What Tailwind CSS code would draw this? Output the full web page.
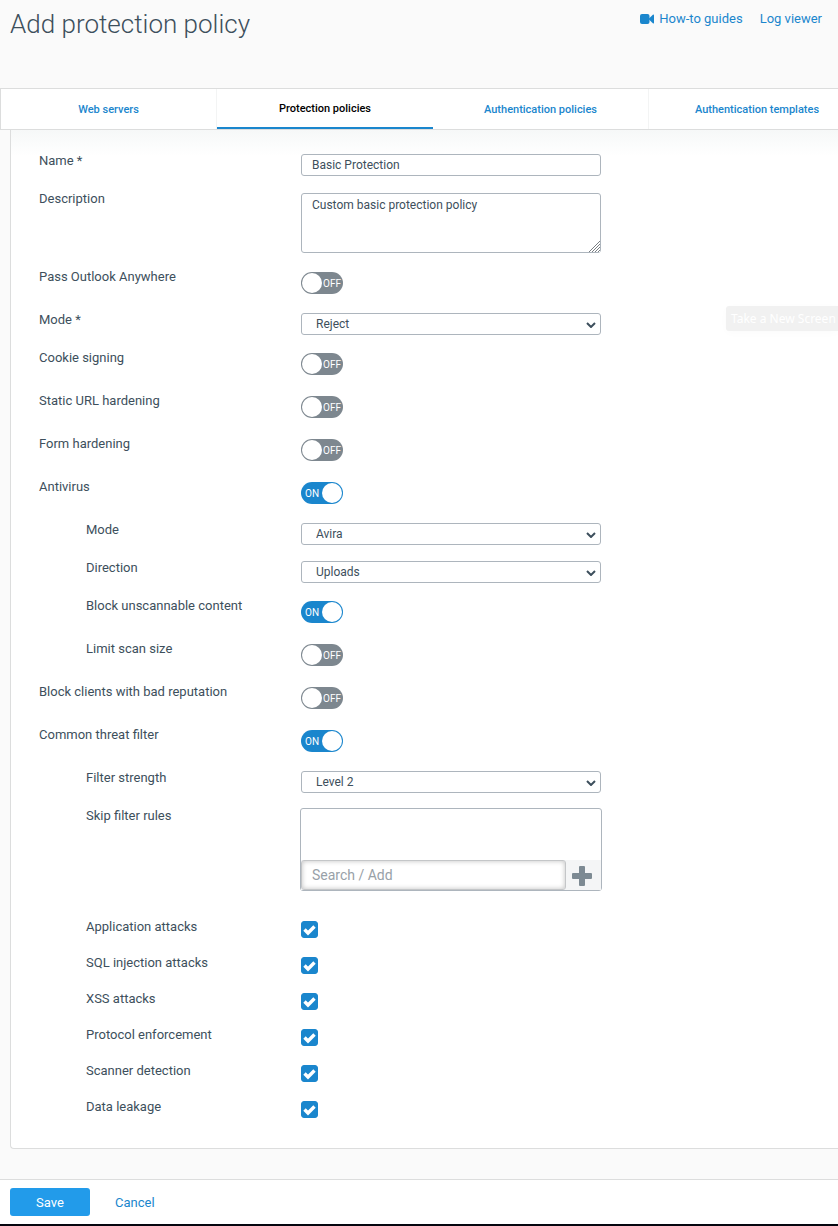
<!DOCTYPE html>
<html lang="en">

<head>
  <meta charset="UTF-8">
  <meta name="viewport" content="width=device-width, initial-scale=1.0">
  <title>Add protection policy</title>
  <script src="https://cdn.jsdelivr.net/npm/@tailwindcss/browser@4"></script>
</head>

<body class="relative min-h-screen overflow-x-hidden bg-[#fafafa] font-['Roboto',sans-serif] text-[13px] leading-5 text-[#3d4f5c]">

  <!-- Shared icons -->
  <svg class="hidden">
    <symbol id="chevron" viewBox="0 0 10 6">
      <path d="m1 1 4 4 4-4" fill="none" stroke="currentColor" stroke-width="2" />
    </symbol>
    <symbol id="check" viewBox="0 0 17 17">
      <path d="m3.500 8.500 3.500 3.500 6.500-6.500" fill="none" stroke="currentColor" stroke-width="3.400" />
    </symbol>
  </svg>

  <!-- Page header -->
  <header class="flex h-[88px] items-start justify-between pl-[10px] pr-4">
    <h1 class="pt-1 text-[26px] font-light leading-10">Add protection policy</h1>
    <nav class="flex gap-[17px] pt-[9px] text-[#1a86cd]">
      <a href="#" class="flex items-center gap-[5px]">
        <svg class="h-[10px] w-[14px]" viewBox="0 0 14 10" fill="currentColor">
          <rect x="0" y="0" width="9.500" height="10" rx="2" />
          <path d="M9 4.500 12.800.700Q14 0 14 1.200V8.800Q14 10 12.800 9.300L9 5.500Z" />
        </svg>
        How-to guides
      </a>
      <a href="#">Log viewer</a>
    </nav>
  </header>

  <!-- Tabs -->
  <nav class="relative flex overflow-hidden border-y border-l border-[#dcdddd] bg-white text-[11px] font-medium text-[#1a86cd]">
    <a href="#" class="flex h-10 w-[216px] shrink-0 items-center justify-center border-r border-[#f3f4f4] pt-px">Web servers</a>
    <a href="#" class="flex h-10 w-[216px] shrink-0 items-center justify-center border-b-2 border-[#1a86cd] pt-px text-black">Protection policies</a>
    <a href="#" class="flex h-10 w-[216px] shrink-0 items-center justify-center border-r border-[#f3f4f4] pt-px">Authentication policies</a>
    <a href="#" class="flex h-10 w-[216px] shrink-0 items-center justify-center pt-px">Authentication templates</a>
  </nav>

  <form>
    <!-- Policy settings -->
    <div class="ml-[10px] rounded-bl-sm border-b border-l border-[#dcdddd] bg-white bg-linear-to-b from-[#f6f8f8] to-white to-[26px] pb-[15px] pl-7 pt-[21px]">

      <div class="flex h-[38px]">
        <label for="name" class="w-[262px] shrink-0">Name *</label>
        <input id="name" type="text" value="Basic Protection"
          class="mt-[3px] h-[22px] w-[300px] rounded-[3px] border border-[#adb5bd] bg-white px-[10px] text-[12px]">
      </div>

      <div class="flex h-[78px]">
        <label for="description" class="w-[262px] shrink-0">Description</label>
        <div class="relative mt-1 h-fit w-fit">
          <textarea id="description"
            class="block h-[60px] w-[300px] rounded-[3px] border border-[#adb5bd] bg-white px-[10px] py-[2px] text-[12px] leading-[18px]">Custom basic protection policy</textarea>
          <svg class="pointer-events-none absolute bottom-px right-px size-[11px] bg-white" viewBox="0 0 11 11" stroke="#7a7f83" stroke-width="1">
            <path d="M0 11 11 0M3 11l8-8M6 11l5-5M9 11l2-2" />
          </svg>
        </div>
      </div>

      <div class="flex h-[43px]">
        <label for="outlook" class="w-[262px] shrink-0">Pass Outlook Anywhere</label>
        <label class="relative mt-[5px] h-[22px] w-[42px] text-[10px] leading-6 text-white">
          <input id="outlook" type="checkbox" class="peer block h-full w-full appearance-none rounded-full bg-[#7d878f] checked:bg-[#1a86cd]">
          <span class="absolute right-[2px] top-0 peer-checked:hidden">OFF</span>
          <span class="absolute left-1 top-0 hidden peer-checked:block">ON</span>
          <span class="absolute left-px top-px size-5 rounded-full bg-white peer-checked:left-[21px]"></span>
        </label>
      </div>

      <div class="flex h-[38px]">
        <label for="mode" class="w-[262px] shrink-0">Mode *</label>
        <div class="relative mt-[3px] h-[22px] w-[300px]">
          <select id="mode" class="block size-full appearance-none rounded-[3px] border border-[#adb5bd] bg-white pl-[14px] text-[12px]">
            <option>Reject</option>
          </select>
          <svg class="pointer-events-none absolute right-[5px] top-[9px] h-[6px] w-[10px]"><use href="#chevron" /></svg>
        </div>
      </div>

      <div class="flex h-[43px]">
        <label for="cookie" class="w-[262px] shrink-0">Cookie signing</label>
        <label class="relative mt-[5px] h-[22px] w-[42px] text-[10px] leading-6 text-white">
          <input id="cookie" type="checkbox" class="peer block h-full w-full appearance-none rounded-full bg-[#7d878f] checked:bg-[#1a86cd]">
          <span class="absolute right-[2px] top-0 peer-checked:hidden">OFF</span>
          <span class="absolute left-1 top-0 hidden peer-checked:block">ON</span>
          <span class="absolute left-px top-px size-5 rounded-full bg-white peer-checked:left-[21px]"></span>
        </label>
      </div>

      <div class="flex h-[43px]">
        <label for="url" class="w-[262px] shrink-0">Static URL hardening</label>
        <label class="relative mt-[5px] h-[22px] w-[42px] text-[10px] leading-6 text-white">
          <input id="url" type="checkbox" class="peer block h-full w-full appearance-none rounded-full bg-[#7d878f] checked:bg-[#1a86cd]">
          <span class="absolute right-[2px] top-0 peer-checked:hidden">OFF</span>
          <span class="absolute left-1 top-0 hidden peer-checked:block">ON</span>
          <span class="absolute left-px top-px size-5 rounded-full bg-white peer-checked:left-[21px]"></span>
        </label>
      </div>

      <div class="flex h-[43px]">
        <label for="formHardening" class="w-[262px] shrink-0">Form hardening</label>
        <label class="relative mt-[5px] h-[22px] w-[42px] text-[10px] leading-6 text-white">
          <input id="formHardening" type="checkbox" class="peer block h-full w-full appearance-none rounded-full bg-[#7d878f] checked:bg-[#1a86cd]">
          <span class="absolute right-[2px] top-0 peer-checked:hidden">OFF</span>
          <span class="absolute left-1 top-0 hidden peer-checked:block">ON</span>
          <span class="absolute left-px top-px size-5 rounded-full bg-white peer-checked:left-[21px]"></span>
        </label>
      </div>

      <!-- Antivirus -->
      <div class="flex h-[43px]">
        <label for="antivirus" class="w-[262px] shrink-0">Antivirus</label>
        <label class="relative mt-[5px] h-[22px] w-[42px] text-[10px] leading-6 text-white">
          <input id="antivirus" type="checkbox" checked class="peer block h-full w-full appearance-none rounded-full bg-[#7d878f] checked:bg-[#1a86cd]">
          <span class="absolute right-[2px] top-0 peer-checked:hidden">OFF</span>
          <span class="absolute left-1 top-0 hidden peer-checked:block">ON</span>
          <span class="absolute left-px top-px size-5 rounded-full bg-white peer-checked:left-[21px]"></span>
        </label>
      </div>

      <div class="flex h-[38px]">
        <label for="avMode" class="w-[262px] shrink-0 pl-[47px]">Mode</label>
        <div class="relative mt-[3px] h-[22px] w-[300px]">
          <select id="avMode" class="block size-full appearance-none rounded-[3px] border border-[#adb5bd] bg-white pl-[14px] text-[12px]">
            <option>Avira</option>
          </select>
          <svg class="pointer-events-none absolute right-[5px] top-[9px] h-[6px] w-[10px]"><use href="#chevron" /></svg>
        </div>
      </div>

      <div class="flex h-[38px]">
        <label for="direction" class="w-[262px] shrink-0 pl-[47px]">Direction</label>
        <div class="relative mt-[3px] h-[22px] w-[300px]">
          <select id="direction" class="block size-full appearance-none rounded-[3px] border border-[#adb5bd] bg-white pl-[14px] text-[12px]">
            <option>Uploads</option>
          </select>
          <svg class="pointer-events-none absolute right-[5px] top-[9px] h-[6px] w-[10px]"><use href="#chevron" /></svg>
        </div>
      </div>

      <div class="flex h-[43px]">
        <label for="unscannable" class="w-[262px] shrink-0 pl-[47px]">Block unscannable content</label>
        <label class="relative mt-[5px] h-[22px] w-[42px] text-[10px] leading-6 text-white">
          <input id="unscannable" type="checkbox" checked class="peer block h-full w-full appearance-none rounded-full bg-[#7d878f] checked:bg-[#1a86cd]">
          <span class="absolute right-[2px] top-0 peer-checked:hidden">OFF</span>
          <span class="absolute left-1 top-0 hidden peer-checked:block">ON</span>
          <span class="absolute left-px top-px size-5 rounded-full bg-white peer-checked:left-[21px]"></span>
        </label>
      </div>

      <div class="flex h-[43px]">
        <label for="scanSize" class="w-[262px] shrink-0 pl-[47px]">Limit scan size</label>
        <label class="relative mt-[5px] h-[22px] w-[42px] text-[10px] leading-6 text-white">
          <input id="scanSize" type="checkbox" class="peer block h-full w-full appearance-none rounded-full bg-[#7d878f] checked:bg-[#1a86cd]">
          <span class="absolute right-[2px] top-0 peer-checked:hidden">OFF</span>
          <span class="absolute left-1 top-0 hidden peer-checked:block">ON</span>
          <span class="absolute left-px top-px size-5 rounded-full bg-white peer-checked:left-[21px]"></span>
        </label>
      </div>

      <div class="flex h-[43px]">
        <label for="reputation" class="w-[262px] shrink-0">Block clients with bad reputation</label>
        <label class="relative mt-[5px] h-[22px] w-[42px] text-[10px] leading-6 text-white">
          <input id="reputation" type="checkbox" class="peer block h-full w-full appearance-none rounded-full bg-[#7d878f] checked:bg-[#1a86cd]">
          <span class="absolute right-[2px] top-0 peer-checked:hidden">OFF</span>
          <span class="absolute left-1 top-0 hidden peer-checked:block">ON</span>
          <span class="absolute left-px top-px size-5 rounded-full bg-white peer-checked:left-[21px]"></span>
        </label>
      </div>

      <!-- Common threat filter -->
      <div class="flex h-[43px]">
        <label for="threatFilter" class="w-[262px] shrink-0">Common threat filter</label>
        <label class="relative mt-[5px] h-[22px] w-[42px] text-[10px] leading-6 text-white">
          <input id="threatFilter" type="checkbox" checked class="peer block h-full w-full appearance-none rounded-full bg-[#7d878f] checked:bg-[#1a86cd]">
          <span class="absolute right-[2px] top-0 peer-checked:hidden">OFF</span>
          <span class="absolute left-1 top-0 hidden peer-checked:block">ON</span>
          <span class="absolute left-px top-px size-5 rounded-full bg-white peer-checked:left-[21px]"></span>
        </label>
      </div>

      <div class="flex h-[38px]">
        <label for="strength" class="w-[262px] shrink-0 pl-[47px]">Filter strength</label>
        <div class="relative mt-[3px] h-[22px] w-[300px]">
          <select id="strength" class="block size-full appearance-none rounded-[3px] border border-[#adb5bd] bg-white pl-[14px] text-[12px]">
            <option>Level 2</option>
          </select>
          <svg class="pointer-events-none absolute right-[5px] top-[9px] h-[6px] w-[10px]"><use href="#chevron" /></svg>
        </div>
      </div>

      <div class="flex h-[111px]">
        <label for="skipRules" class="w-[261px] shrink-0 pl-[47px]">Skip filter rules</label>
        <div class="mt-[2px] flex h-[83px] w-[302px] flex-col justify-end rounded-[3px] border border-[#adb5bd] bg-white">
          <div class="flex bg-[#f4f5f6]">
            <input id="skipRules" type="text" placeholder="Search / Add"
              class="h-[30px] w-[265px] rounded-[3px] border border-[#c4c6c8] bg-white px-[10px] text-[14px] shadow-[inset_0_0_5px_rgba(0,0,0,0.25)] placeholder:text-[#98a1a8]">
            <button type="button" aria-label="Add rule" class="flex flex-1 items-center justify-start pl-[6px] pt-px text-[#7d8a93]">
              <svg class="size-5" viewBox="0 0 20 20" fill="currentColor">
                <path d="M8 0h4q1 0 1 1v6h6q1 0 1 1v4q0 1-1 1h-6v6q0 1-1 1H8q-1 0-1-1v-6H1q-1 0-1-1V8q0-1 1-1h6V1q0-1 1-1Z" />
              </svg>
            </button>
          </div>
        </div>
      </div>

      <!-- Threat categories -->
      <div class="flex h-9">
        <label for="application" class="w-[262px] shrink-0 pl-[47px]">Application attacks</label>
        <span class="relative mt-1 size-[17px] text-white">
          <input id="application" type="checkbox" checked class="peer block size-full appearance-none rounded-[3px] border border-[#1a86cd] checked:bg-[#1a86cd]">
          <svg class="pointer-events-none absolute inset-0 hidden size-full peer-checked:block"><use href="#check" /></svg>
        </span>
      </div>
      <div class="flex h-9">
        <label for="sql" class="w-[262px] shrink-0 pl-[47px]">SQL injection attacks</label>
        <span class="relative mt-1 size-[17px] text-white">
          <input id="sql" type="checkbox" checked class="peer block size-full appearance-none rounded-[3px] border border-[#1a86cd] checked:bg-[#1a86cd]">
          <svg class="pointer-events-none absolute inset-0 hidden size-full peer-checked:block"><use href="#check" /></svg>
        </span>
      </div>
      <div class="flex h-9">
        <label for="xss" class="w-[262px] shrink-0 pl-[47px]">XSS attacks</label>
        <span class="relative mt-1 size-[17px] text-white">
          <input id="xss" type="checkbox" checked class="peer block size-full appearance-none rounded-[3px] border border-[#1a86cd] checked:bg-[#1a86cd]">
          <svg class="pointer-events-none absolute inset-0 hidden size-full peer-checked:block"><use href="#check" /></svg>
        </span>
      </div>
      <div class="flex h-9">
        <label for="protocol" class="w-[262px] shrink-0 pl-[47px]">Protocol enforcement</label>
        <span class="relative mt-1 size-[17px] text-white">
          <input id="protocol" type="checkbox" checked class="peer block size-full appearance-none rounded-[3px] border border-[#1a86cd] checked:bg-[#1a86cd]">
          <svg class="pointer-events-none absolute inset-0 hidden size-full peer-checked:block"><use href="#check" /></svg>
        </span>
      </div>
      <div class="flex h-9">
        <label for="scanner" class="w-[262px] shrink-0 pl-[47px]">Scanner detection</label>
        <span class="relative mt-1 size-[17px] text-white">
          <input id="scanner" type="checkbox" checked class="peer block size-full appearance-none rounded-[3px] border border-[#1a86cd] checked:bg-[#1a86cd]">
          <svg class="pointer-events-none absolute inset-0 hidden size-full peer-checked:block"><use href="#check" /></svg>
        </span>
      </div>
      <div class="flex h-9">
        <label for="leakage" class="w-[262px] shrink-0 pl-[47px]">Data leakage</label>
        <span class="relative mt-1 size-[17px] text-white">
          <input id="leakage" type="checkbox" checked class="peer block size-full appearance-none rounded-[3px] border border-[#1a86cd] checked:bg-[#1a86cd]">
          <svg class="pointer-events-none absolute inset-0 hidden size-full peer-checked:block"><use href="#check" /></svg>
        </span>
      </div>
    </div>

    <!-- Actions -->
    <div class="mt-[30px] flex gap-[25px] border-b-2 border-t border-b-[#05050f] border-t-[#dcdddd] bg-white px-[10px] py-2">
      <button type="submit" class="h-7 w-20 rounded-[3px] bg-[#229bea] pt-px text-white">Save</button>
      <button type="button" class="pt-px text-[#1a86cd]">Cancel</button>
    </div>
  </form>

  <!-- Screenshot hint -->
  <div class="absolute right-0 top-[306px] w-28 overflow-hidden whitespace-nowrap rounded-l-[3px] bg-[#f1f1f1] py-[3px] pl-[5px] font-['Noto_Sans',sans-serif] text-[12px] leading-[19px] text-white shadow-[0_2px_8px_rgba(0,0,0,0.02)]">Take a New Screen</div>

</body>

</html>
